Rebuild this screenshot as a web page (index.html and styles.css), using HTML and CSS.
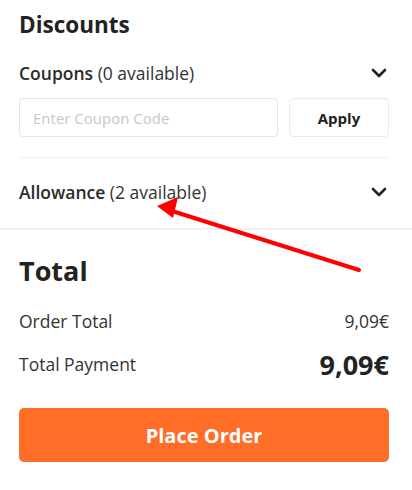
FILE: index.html
```html
<!DOCTYPE html>
<html lang="en">
<head>
<meta charset="utf-8">
<link rel="stylesheet" href="styles.css">
</head>
<body>
<div class="page">
  <section class="discounts">
    <h2 class="title">Discounts</h2>
    <div class="row">
      <div class="label"><span class="strong">Coupons</span> (0 available)</div>
      <svg class="chev" width="16" height="10" viewBox="0 0 16 10"><path d="M2 2 L8 8 L14 2" fill="none" stroke="#222" stroke-width="2.6" stroke-linecap="round" stroke-linejoin="round"/></svg>
    </div>
    <div class="coupon">
      <input class="code" type="text" placeholder="Enter Coupon Code">
      <button class="apply">Apply</button>
    </div>
    <div class="row allowance">
      <div class="label"><span class="strong">Allowance</span> (2 available)</div>
      <svg class="chev" width="16" height="10" viewBox="0 0 16 10"><path d="M2 2 L8 8 L14 2" fill="none" stroke="#222" stroke-width="2.6" stroke-linecap="round" stroke-linejoin="round"/></svg>
    </div>
  </section>
  <section class="total">
    <h2 class="title big">Total</h2>
    <div class="line"><span>Order Total</span><span>9,09€</span></div>
    <div class="line pay"><span>Total Payment</span><span class="amount">9,09€</span></div>
    <button class="order">Place Order</button>
  </section>
  <svg class="arrow" width="412" height="490" viewBox="0 0 412 490">
    <line x1="359" y1="270" x2="172" y2="211" stroke="#ff0000" stroke-width="4" stroke-linecap="round"/>
    <polygon points="157,206 178,197 173,218" fill="#ff0000"/>
  </svg>
</div>
</body>
</html>
```
FILE: styles.css
```css
* { box-sizing: border-box; }
html, body { margin: 0; padding: 0; background: #fff; }
body { font-family: "Open Sans", "DejaVu Sans", sans-serif; color: #222; }
.page { position: relative; width: 412px; height: 490px; overflow: hidden; }
.discounts { padding: 9px 23px 0 19px; border-bottom: 2px solid #f2f2f2; }
.title { margin: 0; font-size: 22.5px; font-weight: 700; line-height: 32px; color: #222; }
.title.big { font-size: 27px; line-height: 38px; }
.row { display: flex; align-items: center; justify-content: space-between; height: 48px; margin-top: 8px; }
.label { font-size: 17.5px; color: #333; }
.strong { font-weight: 600; color: #2a2a2a; }
.chev { margin-right: 2px; }
.coupon { display: flex; gap: 11px; padding-bottom: 20px; border-bottom: 1px solid #f0f0f0; margin-top: 1px; }
.code { flex: 0 0 259px; height: 39px; border: 1px solid #e3e3e3; border-radius: 4px; padding: 0 13px; font-family: inherit; font-size: 15px; color: #333; outline: none; }
.code::placeholder { color: #c8c8c8; }
.apply { flex: 1; height: 39px; border: 1px solid #ebebeb; border-radius: 4px; background: #fff; font-family: inherit; font-size: 15px; font-weight: 700; color: #222; }
.allowance { margin-top: 10px; height: 48px; margin-bottom: 12px; }
.total { padding: 22px 23px 0 19px; }
.line { display: flex; justify-content: space-between; align-items: center; font-size: 17.5px; color: #333; margin-top: 16px; height: 30px; }
.line.pay { margin-top: 8px; height: 40px; }
.amount { font-size: 27px; font-weight: 700; color: #222; }
.order { display: block; width: 100%; height: 54px; margin-top: 24px; border: 0; border-radius: 5px; background: #ff6d27; color: #fff; font-family: inherit; font-size: 20px; font-weight: 700; }
.arrow { position: absolute; left: 0; top: 0; pointer-events: none; }
```
